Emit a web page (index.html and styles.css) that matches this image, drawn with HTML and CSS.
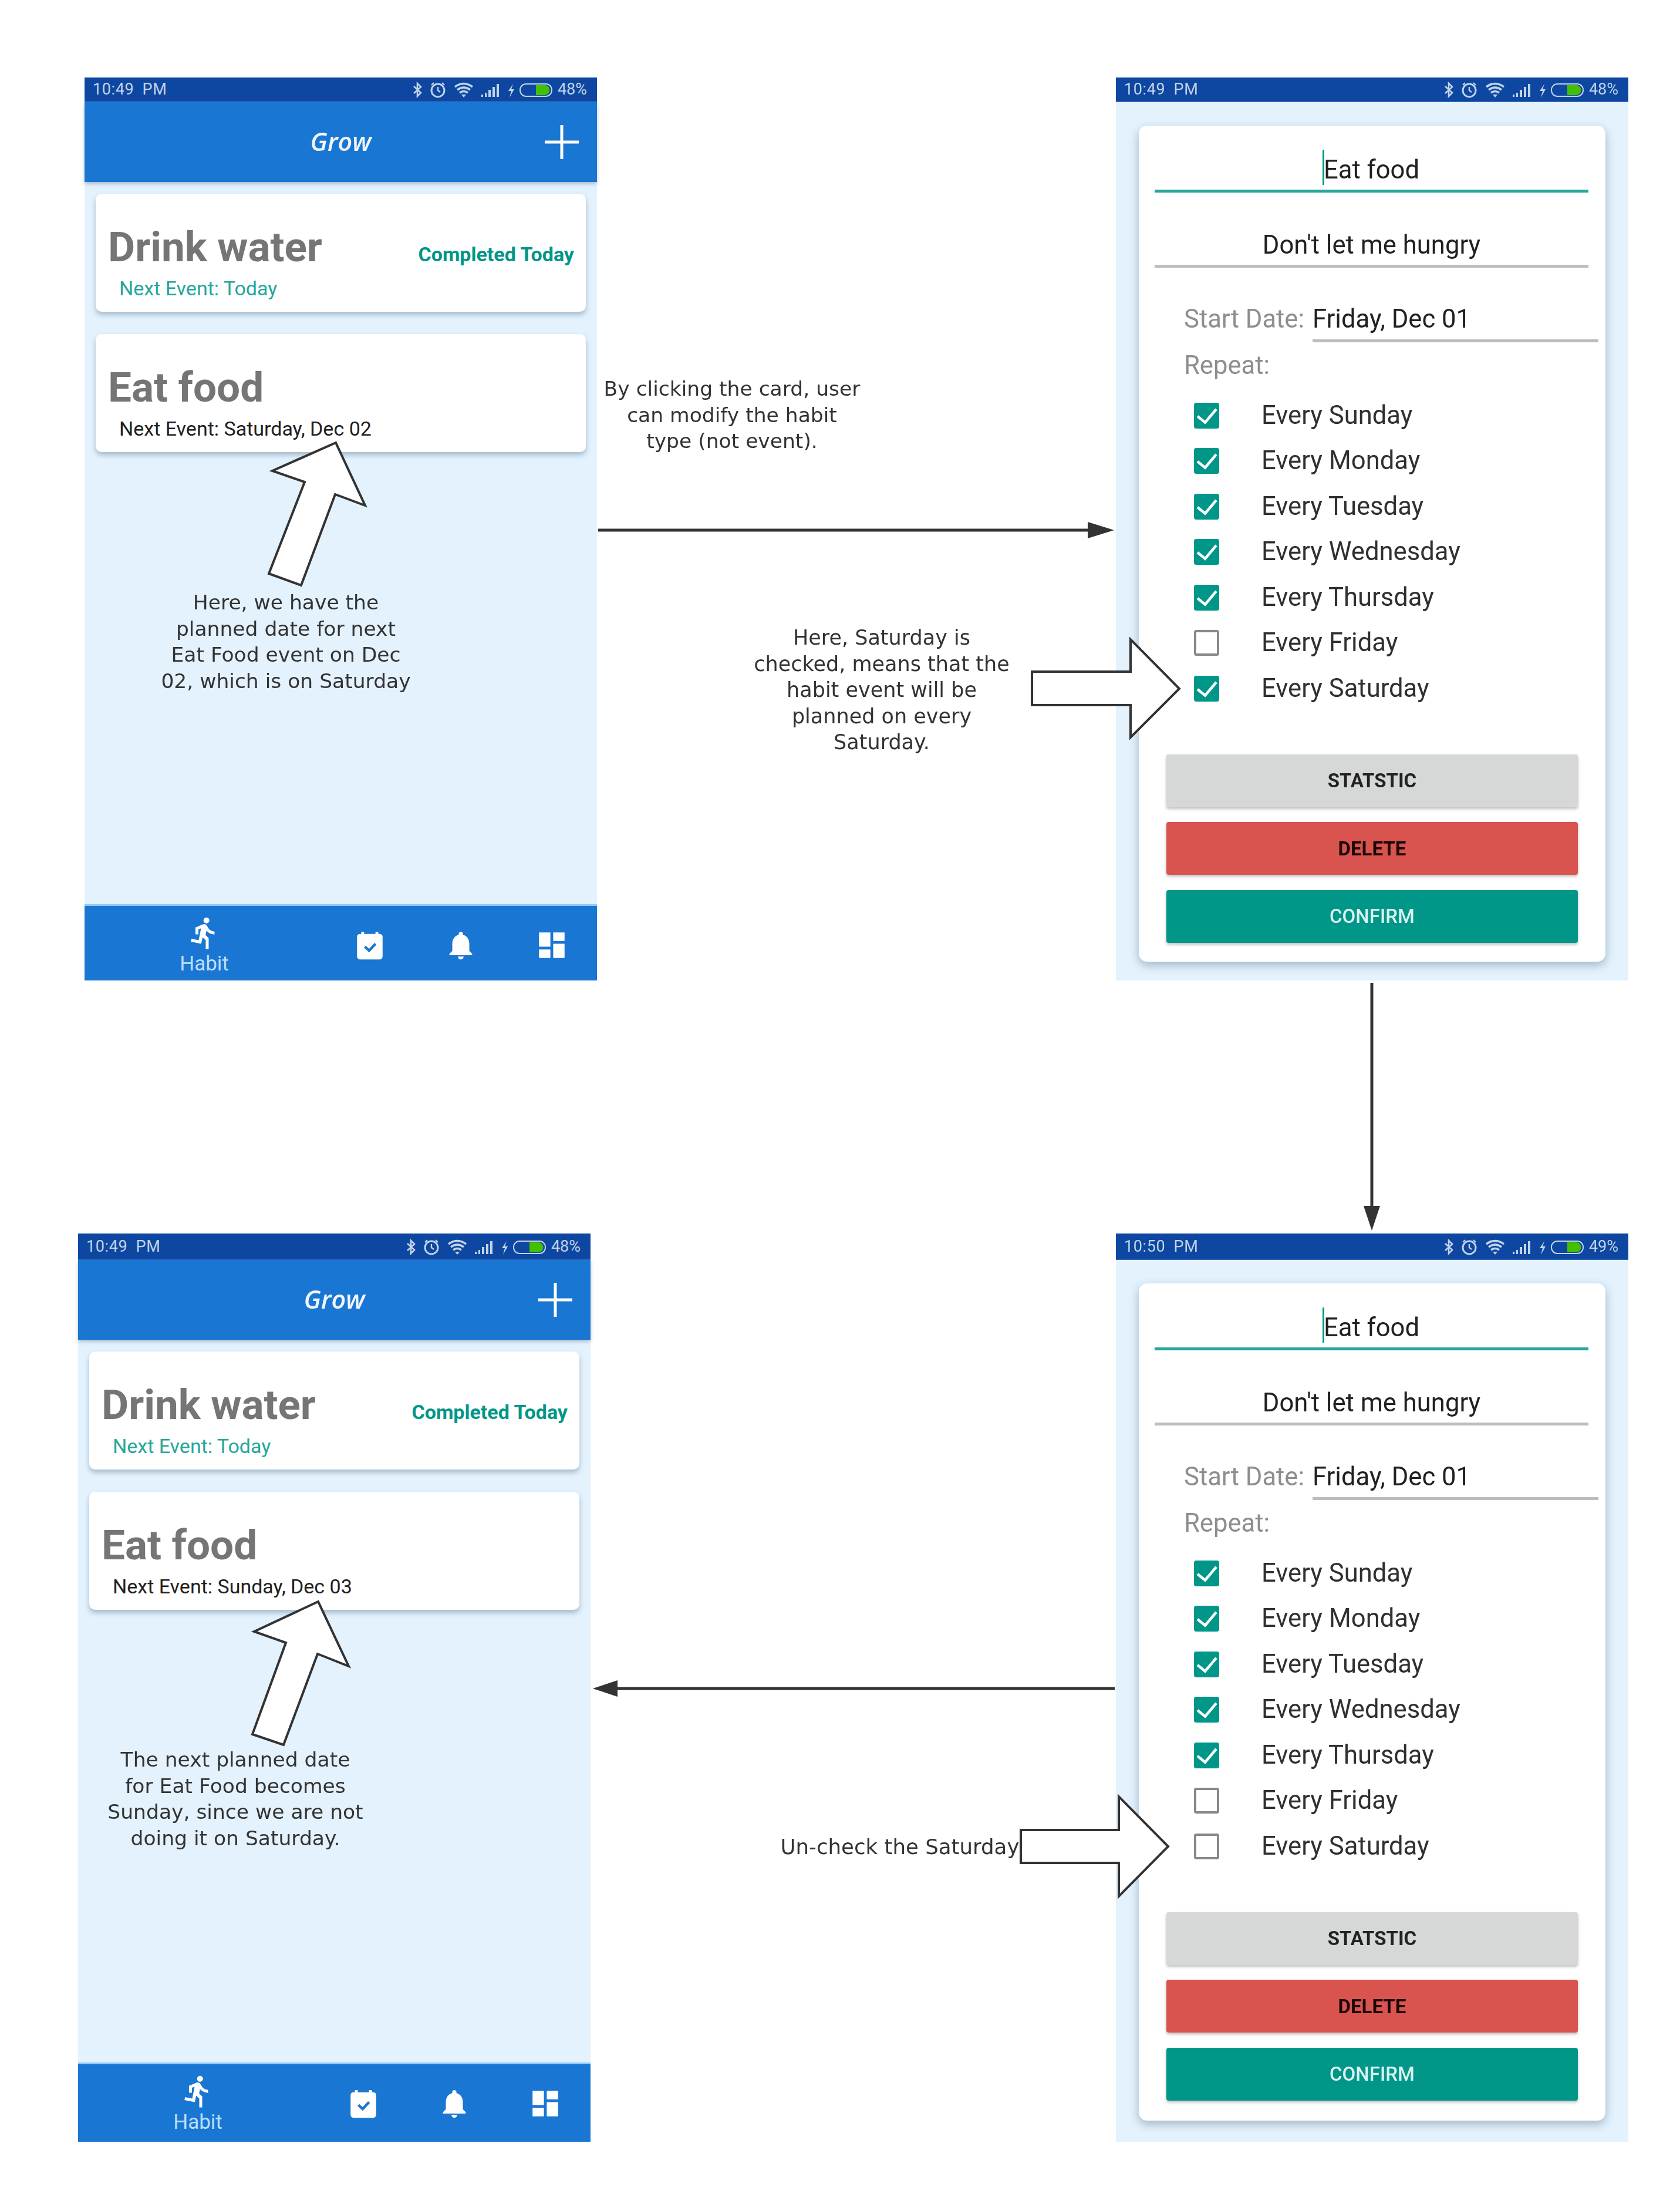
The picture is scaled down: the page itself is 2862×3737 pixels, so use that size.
FILE: index.html
```html
<!DOCTYPE html>
<html lang="en">
  <head>
    <meta charset="UTF-8" />
    <title>Grow - habit flow</title>
    <link rel="stylesheet" href="styles.css">
  </head>
  <body>
    <svg class="icon-defs" width="0" height="0">
      <symbol id="status-icons" viewBox="0 0 245 30">
        <path d="M7 9 19 20 13 26V4l6 6L7 21" fill="none" stroke="currentColor" stroke-width="2.6" />
        <circle cx="48" cy="16" r="11" fill="none" stroke="currentColor" stroke-width="3" />
        <path d="M48 10v6l4 3M37 7l4-4M59 7l-4-4" fill="none" stroke="currentColor" stroke-width="2.4" />
        <path d="M77 10q15-11 30 0M81 15q11-8 22 0M85 20q7-5 14 0" fill="none" stroke="currentColor" stroke-width="3.6" />
        <path d="M88 23h8l-4 5z" fill="currentColor" />
        <path d="M122 23h3v4h-3zM128 20h3v7h-3zM134 15h4v12h-4zM141 10h4v17h-4zM148 5h4v22h-4z" fill="currentColor" />
        <path d="M176 5l-8 12h5l-3 11 8-14h-5z" fill="currentColor" />
        <rect x="188" y="5" width="54" height="21" rx="10" fill="none" stroke="currentColor" stroke-width="2" />
        <path d="M215 7h15a8.500 8.500 0 0 1 0 17h-15z" fill="#44c000" />
      </symbol>
      <symbol id="icon-plus" viewBox="0 0 58 58">
        <path d="M29 0v58M0 29h58" stroke="#fff" stroke-width="5" />
      </symbol>
      <symbol id="icon-run" viewBox="0 0 24 24">
        <path fill="#fff" d="M13.490 5.480c1.100 0 2-.9 2-2s-.9-2-2-2-2 .9-2 2 .9 2 2 2zm-3.600 13.900l1-4.400 2.100 2v6h2v-7.500l-2.100-2 .6-3c1.300 1.500 3.300 2.500 5.500 2.500v-2c-1.900 0-3.500-1-4.300-2.400l-1-1.600c-.4-.6-1-1-1.700-1-.3 0-.5.1-.8.1l-5.200 2.200v4.700h2v-3.400l1.800-.7-1.600 8.100-4.900-1-.4 2 7 1.400z" />
      </symbol>
      <symbol id="icon-event" viewBox="0 0 24 24">
        <path fill="#fff" d="M19 4h-1V2.500h-2V4H8V2.500H6V4H5a2 2 0 0 0-2 2v14a2 2 0 0 0 2 2h14a2 2 0 0 0 2-2V6a2 2 0 0 0-2-2z" />
        <path d="M8.500 13l3 2.800 4.500-4.800" fill="none" stroke="#1976d2" stroke-width="1.800" />
      </symbol>
      <symbol id="icon-bell" viewBox="0 0 24 24">
        <path fill="#fff" d="M12 22c1.100 0 2-.9 2-2h-4c0 1.100.89 2 2 2zm6-6v-5c0-3.070-1.640-5.640-4.500-6.320V4c0-.83-.67-1.500-1.500-1.500s-1.500.67-1.500 1.500v.68C7.630 5.360 6 7.920 6 11v5l-2 2v1h16v-1l-2-2z" />
      </symbol>
      <symbol id="icon-dashboard" viewBox="0 0 24 24">
        <path fill="#fff" d="M3 13h8V3H3v10zm0 8h8v-6H3v6zm10 0h8V11h-8v10zm0-18v6h8V3h-8z" />
      </symbol>
      <symbol id="icon-check" viewBox="0 0 43 44">
        <path d="M6 23l13 10.500L38 11" fill="none" stroke="#fff" stroke-width="4.500" />
      </symbol>
    </svg>

    <main class="board">
      <div class="screens-row screens-top">
        <section class="screen">
          <div class="status-bar">
            <span>10:49 PM</span>
            <div class="status-right">
              <svg class="status-icons"><use href="#status-icons" /></svg>
              <span>48%</span>
            </div>
          </div>
          <header class="app-bar">
            <span></span>
            <h1>Grow</h1>
            <svg class="add-icon"><use href="#icon-plus" /></svg>
          </header>
          <div class="habit-list">
            <article class="habit-card">
              <div class="habit-head">
                <h2>Drink water</h2>
                <span class="habit-done">Completed Today</span>
              </div>
              <p class="habit-next is-today">Next Event: Today</p>
            </article>
            <article class="habit-card">
              <div class="habit-head">
                <h2>Eat food</h2>
              </div>
              <p class="habit-next">Next Event: Saturday, Dec 02</p>
            </article>
          </div>
          <nav class="bottom-nav">
            <div class="nav-tab nav-habit">
              <svg class="nav-run"><use href="#icon-run" /></svg>
              <span>Habit</span>
            </div>
            <div class="nav-tab"><svg class="nav-icon"><use href="#icon-event" /></svg></div>
            <div class="nav-tab"><svg class="nav-icon"><use href="#icon-bell" /></svg></div>
            <div class="nav-tab"><svg class="nav-icon"><use href="#icon-dashboard" /></svg></div>
          </nav>
        </section>

        <section class="screen">
          <div class="status-bar">
            <span>10:49 PM</span>
            <div class="status-right">
              <svg class="status-icons"><use href="#status-icons" /></svg>
              <span>48%</span>
            </div>
          </div>
          <div class="form-wrap">
            <form class="habit-form">
              <div class="field field-active"><span class="caret"></span>Eat food</div>
              <div class="field field-second">Don't let me hungry</div>
              <div class="date-row">
                <span class="form-label">Start Date:</span>
                <span class="date-value">Friday, Dec 01</span>
              </div>
              <div class="form-label repeat-label">Repeat:</div>
              <ul class="repeat-list">
                <li><span class="check is-on"><svg><use href="#icon-check" /></svg></span>Every Sunday</li>
                <li><span class="check is-on"><svg><use href="#icon-check" /></svg></span>Every Monday</li>
                <li><span class="check is-on"><svg><use href="#icon-check" /></svg></span>Every Tuesday</li>
                <li><span class="check is-on"><svg><use href="#icon-check" /></svg></span>Every Wednesday</li>
                <li><span class="check is-on"><svg><use href="#icon-check" /></svg></span>Every Thursday</li>
                <li><span class="check"></span>Every Friday</li>
                <li><span class="check is-on"><svg><use href="#icon-check" /></svg></span>Every Saturday</li>
              </ul>
              <div class="form-buttons">
                <div class="btn btn-grey">Statstic</div>
                <div class="btn btn-red">Delete</div>
                <div class="btn btn-teal">Confirm</div>
              </div>
            </form>
          </div>
        </section>
      </div>

      <div class="screens-row screens-bottom">
        <section class="screen screen-low">
          <div class="status-bar">
            <span>10:49 PM</span>
            <div class="status-right">
              <svg class="status-icons"><use href="#status-icons" /></svg>
              <span>48%</span>
            </div>
          </div>
          <header class="app-bar">
            <span></span>
            <h1>Grow</h1>
            <svg class="add-icon"><use href="#icon-plus" /></svg>
          </header>
          <div class="habit-list">
            <article class="habit-card">
              <div class="habit-head">
                <h2>Drink water</h2>
                <span class="habit-done">Completed Today</span>
              </div>
              <p class="habit-next is-today">Next Event: Today</p>
            </article>
            <article class="habit-card">
              <div class="habit-head">
                <h2>Eat food</h2>
              </div>
              <p class="habit-next">Next Event: Sunday, Dec 03</p>
            </article>
          </div>
          <nav class="bottom-nav">
            <div class="nav-tab nav-habit">
              <svg class="nav-run"><use href="#icon-run" /></svg>
              <span>Habit</span>
            </div>
            <div class="nav-tab"><svg class="nav-icon"><use href="#icon-event" /></svg></div>
            <div class="nav-tab"><svg class="nav-icon"><use href="#icon-bell" /></svg></div>
            <div class="nav-tab"><svg class="nav-icon"><use href="#icon-dashboard" /></svg></div>
          </nav>
        </section>

        <section class="screen screen-low">
          <div class="status-bar">
            <span>10:50 PM</span>
            <div class="status-right">
              <svg class="status-icons"><use href="#status-icons" /></svg>
              <span>49%</span>
            </div>
          </div>
          <div class="form-wrap">
            <form class="habit-form">
              <div class="field field-active"><span class="caret"></span>Eat food</div>
              <div class="field field-second">Don't let me hungry</div>
              <div class="date-row">
                <span class="form-label">Start Date:</span>
                <span class="date-value">Friday, Dec 01</span>
              </div>
              <div class="form-label repeat-label">Repeat:</div>
              <ul class="repeat-list">
                <li><span class="check is-on"><svg><use href="#icon-check" /></svg></span>Every Sunday</li>
                <li><span class="check is-on"><svg><use href="#icon-check" /></svg></span>Every Monday</li>
                <li><span class="check is-on"><svg><use href="#icon-check" /></svg></span>Every Tuesday</li>
                <li><span class="check is-on"><svg><use href="#icon-check" /></svg></span>Every Wednesday</li>
                <li><span class="check is-on"><svg><use href="#icon-check" /></svg></span>Every Thursday</li>
                <li><span class="check"></span>Every Friday</li>
                <li><span class="check"></span>Every Saturday</li>
              </ul>
              <div class="form-buttons">
                <div class="btn btn-grey">Statstic</div>
                <div class="btn btn-red">Delete</div>
                <div class="btn btn-teal">Confirm</div>
              </div>
            </form>
          </div>
        </section>
      </div>

      <!-- arrows and notes of the diagram, on top of the screens -->
      <svg class="arrows" viewBox="0 0 2862 3737">
        <g class="line-arrow">
          <path d="M1019 903H1860" />
          <path class="head" d="M1853 889 1898 903 1853 917z" />
          <path d="M2337 1674V2060" />
          <path class="head" d="M2323 2054 2337 2096 2351 2054z" />
          <path d="M1899 2876H1045" />
          <path class="head" d="M1052 2862 1010 2876 1052 2890z" />
        </g>
        <g class="block-arrow">
          <path d="M572 754 464 802 519 821 458 977 513 997 571 842 622 861z" />
          <path d="M1758 1144H1926V1089L2009 1173 1926 1256V1201H1758z" />
          <path d="M542 2728 433 2779 487 2798 430 2954 483 2972 541 2817 594 2838z" />
          <path d="M1739 3117H1906V3060L1990 3145 1906 3230V3173H1739z" />
        </g>
      </svg>
      <p class="note note-planned">Here, we have the<br>planned date for next<br>Eat Food event on Dec<br>02, which is on Saturday</p>
      <p class="note note-click">By clicking the card, user<br>can modify the habit<br>type (not event).</p>
      <p class="note note-checked">Here, Saturday is<br>checked, means that the<br>habit event will be<br>planned on every<br>Saturday.</p>
      <p class="note note-next">The next planned date<br>for Eat Food becomes<br>Sunday, since we are not<br>doing it on Saturday.</p>
      <p class="note note-uncheck">Un-check the Saturday</p>
    </main>
  </body>
</html>
```

FILE: styles.css
```css
* {
  box-sizing: border-box;
}

body {
  margin: 0;
  background: #fff;
  font-family: Roboto, "Liberation Sans", sans-serif;
}

.icon-defs {
  position: absolute;
}

.board {
  position: relative;
  width: 2862px;
  height: 3737px;
  overflow: hidden;
}

.screens-row {
  display: flex;
  justify-content: space-between;
  padding-right: 88px;
}
.screens-top {
  padding-top: 132px;
  padding-left: 144px;
}
.screens-bottom {
  margin-top: 431px;
  padding-left: 133px;
}

.screen {
  width: 873px;
  height: 1538px;
  display: flex;
  flex-direction: column;
  background: #e3f2fd;
  filter: blur(0.6px);
}
.screen-low {
  height: 1547px;
}

/* status bar */
.status-bar {
  height: 42px;
  flex: none;
  position: relative;
  z-index: 2;
  display: flex;
  justify-content: space-between;
  align-items: center;
  padding: 0 17px 0 14px;
  background: #0d47a1;
  border-bottom: 2px solid #2a62b5;
  color: #c3d3e8;
  font-size: 27px;
  letter-spacing: 0.6px;
  word-spacing: 7px;
}
.screen-low .status-bar {
  height: 45px;
}
.status-right {
  display: flex;
  align-items: center;
  gap: 5px;
  letter-spacing: 0;
}
.status-icons {
  width: 245px;
  height: 30px;
  margin-right: 2px;
  margin-top: 2px;
}

/* app bar */
.app-bar {
  height: 136px;
  flex: none;
  position: relative;
  z-index: 1;
  display: grid;
  grid-template-columns: 1fr auto 1fr;
  align-items: center;
  padding-right: 31px;
  background: #1976d2;
  box-shadow: 0 3px 6px rgba(30, 60, 90, 0.3);
}
.app-bar h1 {
  margin: 0 0 4px 31px;
  color: #f1f6fc;
  font-family: "Open Sans", sans-serif;
  font-size: 43px;
  font-style: italic;
  font-weight: 600;
}
.add-icon {
  width: 58px;
  height: 58px;
  justify-self: end;
}

/* habit cards */
.habit-list {
  flex: 1;
  display: flex;
  flex-direction: column;
  gap: 38px;
  padding: 20px 19px;
}
.habit-card {
  height: 201px;
  padding: 49px 20px 0 21px;
  background: #fff;
  border-radius: 10px;
  box-shadow: 0 5px 8px rgba(70, 100, 130, 0.4);
}
.habit-head {
  display: flex;
  justify-content: space-between;
  align-items: baseline;
}
.habit-card h2 {
  margin: 0;
  color: #757575;
  font-size: 71px;
  line-height: 84px;
  font-weight: 700;
}
.habit-done {
  color: #009688;
  font-size: 34px;
  font-weight: 700;
}
.habit-next {
  margin: 8px 0 0 19px;
  color: #212121;
  font-size: 34px;
  line-height: 40px;
}
.habit-next.is-today {
  color: #26a69a;
}

/* bottom nav */
.bottom-nav {
  height: 130px;
  flex: none;
  display: grid;
  grid-template-columns: 408px repeat(3, 155px);
  background: #1976d2;
  border-top: 3px solid #90caf9;
}
.screen-low .bottom-nav {
  height: 135px;
}
.nav-tab {
  display: flex;
  flex-direction: column;
  align-items: center;
  padding-top: 38px;
}
.nav-habit {
  padding-top: 16px;
  color: #bbdefb;
  font-size: 35px;
  line-height: 36px;
}
.nav-run {
  width: 60px;
  height: 60px;
  margin-bottom: 5px;
}
.nav-icon {
  width: 58px;
  height: 58px;
}

/* edit form */
.form-wrap {
  flex: 1;
  display: flex;
  padding: 40px 39px 32px;
}
.screen-low .form-wrap {
  padding-bottom: 36px;
}
.habit-form {
  flex: 1;
  padding: 41px 29px 0 27px;
  background: #fff;
  border-radius: 14px;
  box-shadow: 0 6px 16px rgba(60, 90, 120, 0.4);
}
.field {
  position: relative;
  padding-bottom: 7px;
  border-bottom: 5px solid #bdbdbd;
  color: #212121;
  font-size: 43.6px;
  line-height: 52px;
  text-align: center;
}
.field-active {
  border-bottom-color: #26a69a;
}
.field-second {
  margin-top: 64px;
}
.caret {
  display: inline-block;
  width: 3px;
  height: 60px;
  margin: 0 -1px 0 -2px;
  vertical-align: -11px;
  background: #009688;
}
.date-row {
  display: flex;
  align-items: flex-start;
  gap: 14px;
  margin: 62px -17px 0 50px;
}
.form-label {
  color: #8e8e8e;
  font-size: 43.6px;
  line-height: 52px;
}
.date-value {
  flex: 1;
  padding-bottom: 8px;
  border-bottom: 5px solid #bdbdbd;
  color: #212121;
  font-size: 43.6px;
  line-height: 52px;
}
.repeat-label {
  margin: 14px 0 0 50px;
}
.repeat-list {
  margin: 20px 0 0;
  padding: 0 0 0 67px;
  list-style: none;
}
.repeat-list li {
  height: 77.5px;
  display: flex;
  align-items: center;
  gap: 72px;
  color: #303030;
  font-size: 43.6px;
  line-height: 52px;
}
.check {
  width: 43px;
  height: 44px;
  flex: none;
  border: 4px solid #888;
  border-radius: 4px;
}
.check.is-on {
  border: 0;
  background: #009688;
}
.check svg {
  display: block;
  width: 43px;
  height: 44px;
}
.form-buttons {
  display: flex;
  flex-direction: column;
  gap: 25.5px;
  margin: 73px 18px 0 20px;
}
.btn {
  height: 90px;
  display: flex;
  align-items: center;
  justify-content: center;
  border-radius: 4px;
  box-shadow: 0 3px 5px rgba(0, 0, 0, 0.25);
  font-size: 33px;
  font-weight: 700;
  text-transform: uppercase;
}
.btn-grey {
  background: #d6d7d7;
  color: #222;
}
.btn-red {
  background: #d9534f;
  color: #1a0505;
}
.btn-teal {
  background: #009688;
  color: #d8f3f0;
  font-weight: 500;
}

/* diagram overlay */
.arrows {
  position: absolute;
  top: 0;
  left: 0;
  width: 2862px;
  height: 3737px;
}
.line-arrow path {
  fill: none;
  stroke: #333;
  stroke-width: 5;
}
.line-arrow .head {
  fill: #333;
  stroke: none;
}
.block-arrow path {
  fill: #fff;
  stroke: #333;
  stroke-width: 4;
  stroke-linejoin: miter;
}
.note {
  position: absolute;
  width: 520px;
  margin: 0;
  color: #333;
  font-family: "DejaVu Sans", sans-serif;
  font-size: 34.5px;
  line-height: 44.6px;
  text-align: center;
}
.note-planned {
  top: 1004px;
  left: 227px;
}
.note-click {
  top: 640px;
  left: 987px;
}
.note-checked {
  top: 1064px;
  left: 1242px;
  font-size: 35px;
}
.note-next {
  top: 2975px;
  left: 141px;
}
.note-uncheck {
  top: 3124px;
  left: 1273px;
  font-size: 35.6px;
}
```
